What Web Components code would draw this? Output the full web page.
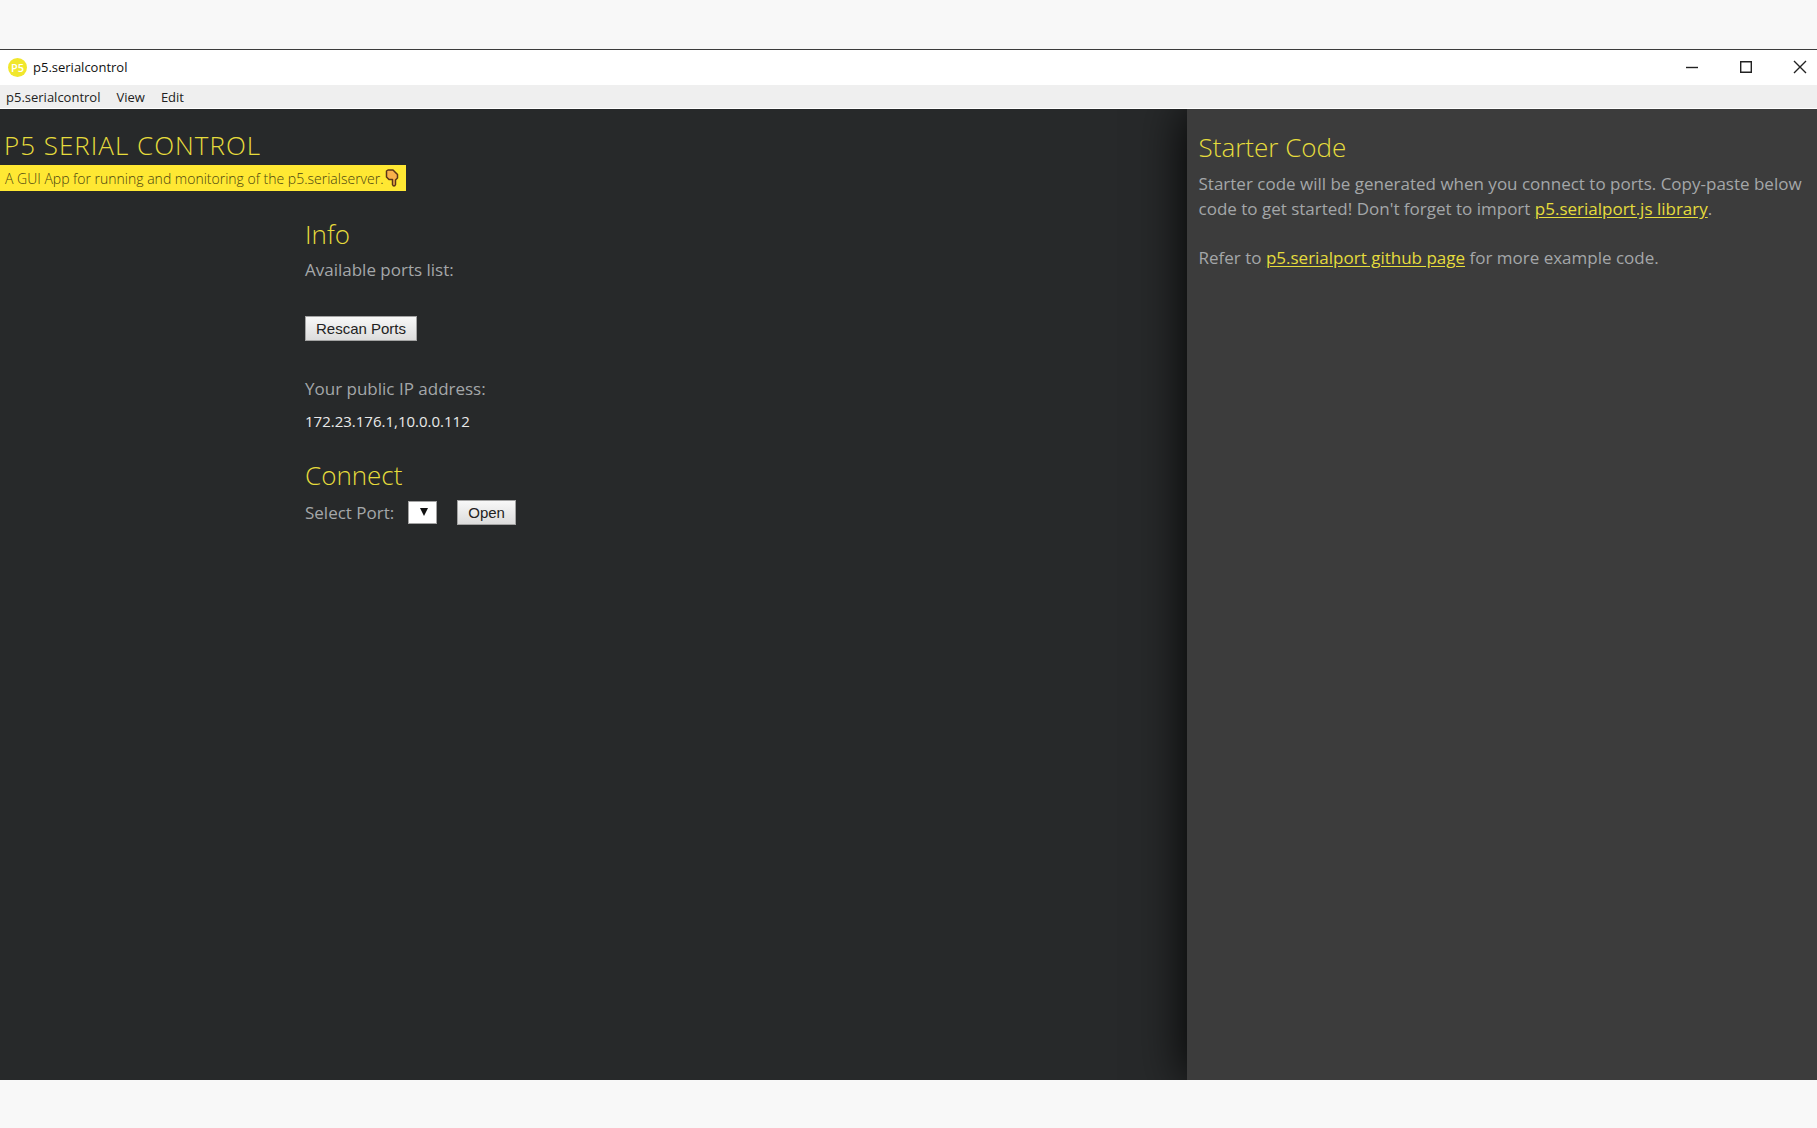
<!DOCTYPE html>
<html lang="en">
<head>
<meta charset="utf-8">
<title>p5.serialcontrol</title>
<style>
  html, body { height: 100%; }
  body {
    margin: 0; box-sizing: border-box; padding: 49px 0 48px;
    background: #f8f8f8; color: #a4a7a9;
    font-family: "Open Sans", "Noto Sans", sans-serif; font-size: 17px; font-weight: 400;
  }
</style>
</head>
<body>
<app-window></app-window>
<script>
function define(name, html) {
  const template = document.createElement('template');
  template.innerHTML = html;
  customElements.define(name, class extends HTMLElement {
    constructor() {
      super();
      this.attachShadow({ mode: 'open' }).append(template.content.cloneNode(true));
    }
  });
}

define('title-bar', `
<style>
  :host { display: flex; align-items: center; height: 34px; padding-bottom: 1px; background: #fff; color: #111; font-size: 13px; font-weight: 400; border-top: 1px solid #3c3c3c; }
  .logo { width: 19px; height: 19px; margin: 0 6px 0 8px; border-radius: 50%; background: #f1e72c; color: #fff;
    display: flex; align-items: center; justify-content: center; font-size: 11px; font-weight: 600; line-height: 19px; }
  .name { flex: 1; }
  button { width: 54px; height: 32px; padding: 0; border: 0; background: none; display: grid; place-items: center; }
  button:last-child { width: 34px; margin-left: 10px; }
  svg { width: 14px; height: 14px; fill: none; stroke: #222; stroke-width: 1.4; }
</style>
<span class="logo">P5</span><span class="name"><slot></slot></span>
<button aria-label="Minimize"><svg viewBox="0 0 14 14"><path d="M1 7.5h12"/></svg></button>
<button aria-label="Maximize"><svg viewBox="0 0 14 14"><path d="M1.7 1.7h10.6v10.6H1.7z"/></svg></button>
<button aria-label="Close"><svg viewBox="0 0 14 14"><path d="M1 1l12 12M13 1L1 13"/></svg></button>
`);

define('menu-bar', `
<style>
  :host { display: flex; align-items: center; gap: 16px; height: 23px; padding: 0 6px; background: #efefef; border-bottom: 1px solid #fff; }
  button { padding: 0; border: 0; background: none; color: #222; font: 400 13px/20px "Open Sans", "Noto Sans", sans-serif; }
</style>
<button>p5.serialcontrol</button><button>View</button><button>Edit</button>
`);

define('section-title', `
<style>
  :host { display: block; margin-bottom: 2px; }
  h2 { margin: 0; font-size: 26px; font-weight: 300; line-height: 36px; color: #e6dc3c; }
</style>
<h2><slot></slot></h2>
`);

define('push-button', `
<style>
  :host { display: inline-block; }
  button { display: block; height: 25px; padding: 0 10px; border: 1px solid #a3a3a3; background: linear-gradient(#f8f8f8, #dcdcdc);
    color: #222; font: 400 15px/22px "Liberation Sans", sans-serif; }
</style>
<button><slot></slot></button>
`);

define('app-header', `
<style>
  :host { display: block; padding-top: 16px; }
  h1 { margin: 0; padding-left: 4px; font-size: 26px; font-weight: 300; line-height: 40px; letter-spacing: 1px; color: #e6dc3c; }
  p { display: inline-flex; align-items: center; gap: 1px; margin: 0; padding: 0 7px 0 5px; height: 26px; background: #ffe833; color: #4a4310; font-size: 14px; font-weight: 300; }
  svg { width: 14px; height: 18px; }
</style>
<h1>P5 SERIAL CONTROL</h1>
<p><span>A GUI App for running and monitoring of the p5.serialserver.</span><svg viewBox="0 0 14 18" role="img" aria-label="Pointing down"><path d="M1.500 2L3 1H8L12.500 5.500V9L10.500 11V15.500Q10 17 9 17T7.500 15.500V10.500H4L1.500 8Z" fill="#f8b14a" stroke="#5b3518" stroke-width="1.500" stroke-linejoin="round"/></svg></p>
`);

define('port-info', `
<style>
  :host { display: flex; flex-direction: column; align-items: flex-start; }
  p { margin: 0; line-height: 32px; }
  push-button { margin: 30px 0 32px; }
  .ip { color: #e9e9e9; font-size: 15px; }
</style>
<section-title>Info</section-title>
<p>Available ports list:</p>
<push-button>Rescan Ports</push-button>
<p>Your public IP address:</p>
<p class="ip">172.23.176.1,10.0.0.112</p>
`);

define('port-connect', `
<style>
  :host { display: block; }
  .row { display: flex; align-items: center; height: 35px; }
  label { margin-right: 14px; }
  select { appearance: none; width: 29px; height: 23px; margin-right: 20px; padding: 0; border: 1px solid #a3a3a3; border-radius: 0;
    background: #fff; }
  .box { display: grid; }
  .box > * { grid-area: 1 / 1; }
  svg { width: 8px; height: 8px; margin: 7px 0 0 12px; pointer-events: none; z-index: 1; }
</style>
<section-title>Connect</section-title>
<div class="row"><label for="port">Select Port:</label><span class="box"><select id="port"></select><svg viewBox="0 0 8 8"><path d="M0 0h8L4 8z" fill="#111"/></svg></span><push-button>Open</push-button></div>
`);

define('starter-panel', `
<style>
  :host { display: block; padding: 20px 10px 0 12px; background: #3c3c3c; box-shadow: -1px 0 46px rgba(0, 0, 0, .95); }
  section-title { margin-bottom: 6px; }
  p { margin: 0 0 24px; line-height: 25px; }
  a { color: #e6dc3c; text-underline-offset: 2px; }
</style>
<section-title>Starter Code</section-title>
<p>Starter code will be generated when you connect to ports. Copy-paste below code to get started! Don't forget to import <a href="#library">p5.serialport.js library</a>.</p>
<p>Refer to <a href="#github">p5.serialport github page</a> for more example code.</p>
`);

define('app-window', `
<style>
  :host { display: flex; flex-direction: column; height: 100%; }
  .content { flex: 1; display: flex; overflow: hidden; background: #27292a; }
  main { flex: 1; }
  .body { display: flex; flex-direction: column; gap: 20px; margin: 25px 0 0 305px; }
  starter-panel { width: 34.7%; box-sizing: border-box; }
</style>
<title-bar>p5.serialcontrol</title-bar>
<menu-bar></menu-bar>
<div class="content">
  <main><app-header></app-header><div class="body"><port-info></port-info><port-connect></port-connect></div></main>
  <starter-panel></starter-panel>
</div>
`);
</script>
</body>
</html>
